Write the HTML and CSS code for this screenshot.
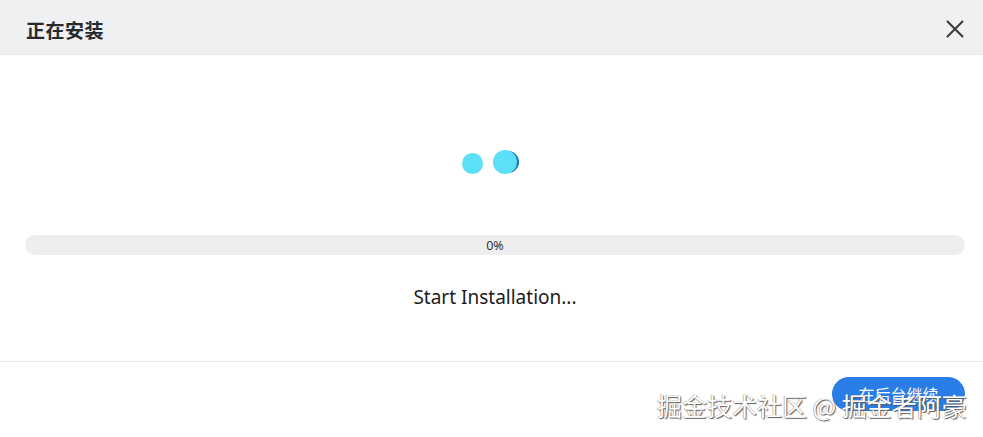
FILE: index.html
```html
<!DOCTYPE html>
<html lang="zh">
<head>
<meta charset="utf-8">
<title>正在安装</title>
<link rel="stylesheet" href="styles.css">
</head>
<body>
<div class="dialog">
  <div class="header">
    <div class="title">正在安装</div>
    <button class="close" aria-label="关闭">
      <svg width="18" height="18" viewBox="0 0 18 18"><path d="M1.5 1.5 L16.5 16.5 M16.5 1.5 L1.5 16.5" stroke="#3a3a3a" stroke-width="2" stroke-linecap="round" fill="none"/></svg>
    </button>
  </div>
  <div class="body">
    <div class="spinner">
      <span class="dot dot-a"></span>
      <span class="dot dot-b"></span>
    </div>
    <div class="progress"><span class="progress-label">0%</span></div>
    <div class="status">Start Installation...</div>
  </div>
  <div class="footer">
    <button class="primary">在后台继续</button>
  </div>
</div>
<div class="watermark">掘金技术社区 @ 掘金者阿豪</div>
</body>
</html>
```
FILE: styles.css
```css
html, body {
  margin: 0;
  padding: 0;
  background: #ffffff;
  font-family: "Noto Sans", "Noto Sans CJK SC", sans-serif;
  width: 983px;
  height: 437px;
  overflow: hidden;
}
.dialog {
  display: flex;
  flex-direction: column;
}
.header {
  background: #eff0f2;
  border-bottom: 1px solid #e6e7e9;
  display: flex;
  align-items: center;
  justify-content: space-between;
  padding: 4px 19px 0 26px;
  box-sizing: content-box;
  height: 50px;
}
.title {
  font-family: "Noto Sans CJK SC", sans-serif;
  font-weight: 700;
  font-size: 19px;
  color: #26292c;
  letter-spacing: 0.5px;
}
.close {
  border: 0;
  background: transparent;
  padding: 0;
  width: 18px;
  height: 18px;
  display: flex;
}
.body {
  display: flex;
  flex-direction: column;
  align-items: stretch;
  padding: 95px 18px 52px 25px;
}
.spinner {
  display: flex;
  justify-content: center;
  align-items: center;
  height: 24px;
  gap: 10px;
  padding-right: 12px;
}
.dot {
  display: block;
  border-radius: 50%;
  background: #5ce0f7;
}
.dot-a {
  width: 21px;
  height: 21px;
  margin-top: 2px;
}
.dot-b {
  width: 24px;
  height: 24px;
  box-shadow: 3px 0 0 -1px #1b6fc0;
}
.progress {
  margin-top: 61px;
  height: 20px;
  border-radius: 10px;
  background: #eeeeee;
  display: flex;
  align-items: center;
  justify-content: center;
}
.progress-label {
  font-size: 12.5px;
  color: #333333;
  line-height: 20px;
  padding-top: 1px;
}
.status {
  margin-top: 30px;
  text-align: center;
  font-size: 19px;
  line-height: 24px;
  color: #1c1c1c;
}
.footer {
  border-top: 1px solid #ebebeb;
  display: flex;
  justify-content: flex-end;
  padding: 15px 18px 0 25px;
}
.primary {
  width: 133px;
  height: 34px;
  border: 0;
  border-radius: 17px;
  background: #2a7de6;
  color: #ffffff;
  font-family: "Noto Sans CJK SC", sans-serif;
  font-size: 16px;
  padding: 0;
}
.watermark {
  position: absolute;
  left: 657px;
  top: 389px;
  font-family: "Noto Sans CJK SC", sans-serif;
  font-size: 25px;
  line-height: 32px;
  color: #ffffff;
  text-shadow: 1px 1px 1px #5a5a5a, -0.5px -0.5px 0 #8a8a8a;
  white-space: nowrap;
}
```
